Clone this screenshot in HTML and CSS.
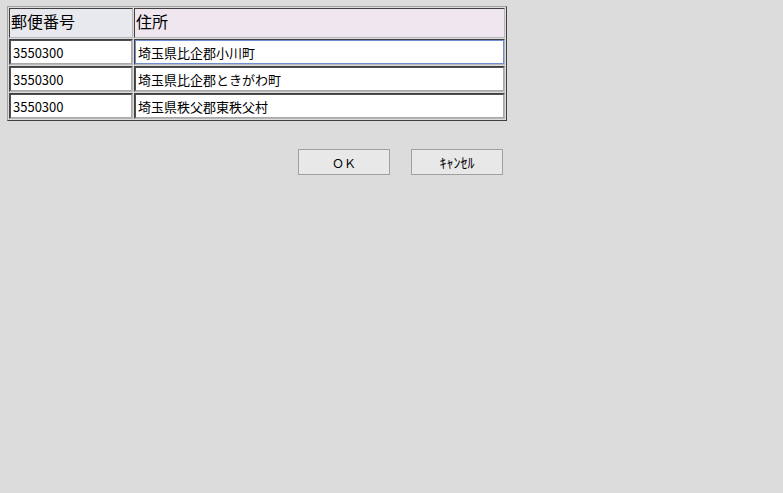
FILE: index.html
```html
<!DOCTYPE html>
<html lang="ja">
<head>
<meta charset="UTF-8" />
<title>住所選択</title>
<link rel="stylesheet" href="styles.css">
</head>
<body>

<table class="addr-table">
  <tr class="head-row">
    <th class="col-zip">郵便番号</th>
    <th class="col-addr">住所</th>
  </tr>
  <tr>
    <td><input class="cell-input" type="text" value="3550300"></td>
    <td><input class="cell-input focused" type="text" value="埼玉県比企郡小川町"></td>
  </tr>
  <tr>
    <td><input class="cell-input" type="text" value="3550300"></td>
    <td><input class="cell-input" type="text" value="埼玉県比企郡ときがわ町"></td>
  </tr>
  <tr>
    <td><input class="cell-input" type="text" value="3550300"></td>
    <td><input class="cell-input" type="text" value="埼玉県秩父郡東秩父村"></td>
  </tr>
</table>

<div class="button-row">
  <button class="btn">ＯＫ</button>
  <button class="btn btn-cancel">ｷｬﾝｾﾙ</button>
</div>

</body>
</html>
```

FILE: styles.css
```css
body {
  margin: 0;
  padding: 6px 0 0 7px;
  background: #dcdcdc;
  font-family: "Noto Sans CJK JP", "DejaVu Sans", sans-serif;
  color: #000;
}

.addr-table {
  width: 500px;
  border-collapse: separate;
  border-spacing: 1px;
  border: 1px solid;
  border-color: #a0a0a0 #404040 #404040 #a0a0a0;
  table-layout: fixed;
}

.addr-table th,
.addr-table td {
  padding: 0;
  border: 1px solid;
  border-color: #404040 #b8b8b8 #b8b8b8 #404040;
}

.head-row th {
  height: 24px;
  text-align: left;
  font-weight: normal;
  font-size: 16px;
  line-height: 24px;
  padding: 0 0 4px 1px;
}

.col-zip {
  width: 121px;
  background: #e8e8ef;
}

.col-addr {
  background: #efe6ef;
}

.addr-table td {
  height: 24px;
  background: #fff;
}

.cell-input {
  display: block;
  box-sizing: border-box;
  width: 100%;
  height: 24px;
  margin: 0;
  padding: 0 0 0 2px;
  border: 1px solid;
  border-color: #505050 #a8a8a8 #a8a8a8 #505050;
  font-family: "Noto Sans CJK JP", "DejaVu Sans", sans-serif;
  font-size: 13px;
  color: #000;
  background: #fff;
  outline: none;
}

.cell-input.focused {
  border-color: #6f8fcf;
}

.button-row {
  display: flex;
  gap: 21px;
  margin: 28px 0 0 291px;
}

.btn {
  box-sizing: border-box;
  width: 92px;
  height: 26px;
  border: 1px solid #a0a0a0;
  background: #e8e8e8;
  font-family: "Noto Sans CJK JP", "DejaVu Sans", sans-serif;
  font-size: 12px;
  color: #000;
  padding: 0;
}

.btn-cancel {
  font-size: 14px;
}
```
